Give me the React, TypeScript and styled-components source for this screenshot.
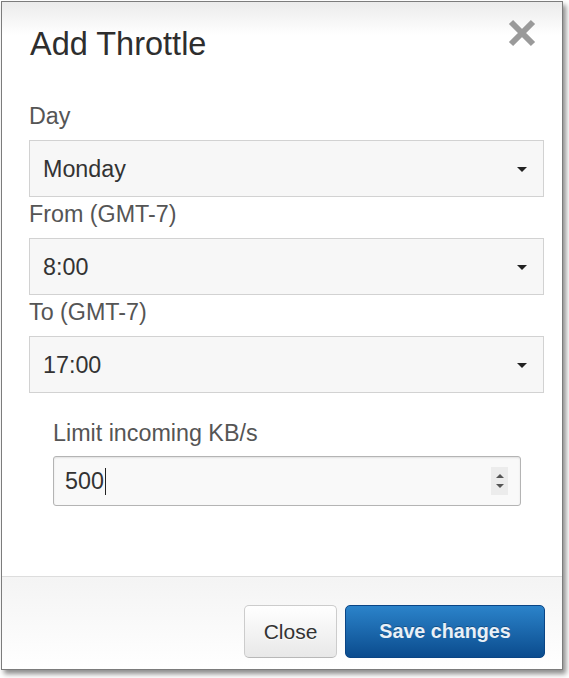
import React from "react";
import styled, { createGlobalStyle } from "styled-components";

const GlobalStyle = createGlobalStyle`
  html, body { margin: 0; padding: 0; background: #ffffff; }
  body { font-family: "Liberation Sans", Arial, sans-serif; }
  * { box-sizing: border-box; }
`;

const Page = styled.div`
  padding: 1px 0 0 1px;
  width: 569px;
  height: 678px;
`;

const Dialog = styled.div`
  width: 562px;
  height: 669px;
  border: 1px solid #7c7c7c;
  background: #ffffff;
  box-shadow: 3px 4px 5px rgba(0, 0, 0, 0.45);
  display: flex;
  flex-direction: column;
`;

const Header = styled.div`
  display: flex;
  justify-content: space-between;
  align-items: flex-start;
  padding: 17px 26px 0 28px;
  background: linear-gradient(#ebebeb 0%, #ffffff 55%);
`;

const Title = styled.h3`
  margin: 7px 0 0;
  font-size: 32.5px;
  line-height: 36px;
  font-weight: normal;
  color: #2e2e2e;
`;

const CloseX = styled.button`
  border: 0;
  padding: 0;
  background: transparent;
  width: 28px;
  height: 28px;
  display: flex;
  cursor: pointer;
`;

const Body = styled.div`
  padding: 41px 17px 0 27px;
  display: flex;
  flex-direction: column;
`;

const Field = styled.div<{ $indent?: number; $top?: number }>`
  display: flex;
  flex-direction: column;
  padding-left: ${(p) => p.$indent ?? 0}px;
  margin-top: ${(p) => p.$top ?? 0}px;
  margin-bottom: 4px;
`;

const Label = styled.label<{ $gap?: number }>`
  font-size: 23.3px;
  line-height: 26px;
  color: #555555;
  margin-bottom: ${(p) => p.$gap ?? 11}px;
`;

const SelectBox = styled.div`
  height: 57px;
  width: 515px;
  border: 1px solid #d2d2d2;
  background: #f7f7f7;
  display: flex;
  align-items: center;
  justify-content: space-between;
  padding: 2px 16px 0 13px;
  font-size: 23.3px;
  color: #333333;
`;

const Caret = styled.span`
  width: 0;
  height: 0;
  border-left: 5px solid transparent;
  border-right: 5px solid transparent;
  border-top: 5px solid #222222;
`;

const NumberBox = styled.div`
  width: 468px;
  height: 50px;
  border: 1px solid #b4b4b4;
  border-radius: 3px;
  background: #f9f9f9;
  box-shadow: inset 0 1px 2px rgba(0, 0, 0, 0.1);
  display: flex;
  align-items: center;
  justify-content: space-between;
  padding: 0 12px 0 11px;
  font-size: 23.3px;
  color: #333333;
`;

const Value = styled.span`
  display: flex;
  align-items: center;
`;

const TextCursor = styled.span`
  width: 1px;
  height: 27px;
  background: #222222;
  margin-left: 1px;
`;

const Spinner = styled.span`
  width: 17px;
  height: 28px;
  background: #ececec;
  display: flex;
  flex-direction: column;
  align-items: center;
  justify-content: center;
  gap: 6px;
`;

const Arrow = styled.span<{ $up?: boolean }>`
  width: 0;
  height: 0;
  border-left: 4px solid transparent;
  border-right: 4px solid transparent;
  ${(p) =>
    p.$up ? "border-bottom: 4px solid #555;" : "border-top: 4px solid #555;"}
`;

const Footer = styled.div`
  margin-top: auto;
  border-top: 1px solid #dddddd;
  background: linear-gradient(#f4f4f4 0%, #ffffff 100%);
  padding: 28px 17px 11px;
  display: flex;
  justify-content: flex-end;
  gap: 8px;
`;

const Button = styled.button<{ $primary?: boolean }>`
  height: 53px;
  border-radius: 5px;
  font-family: "Liberation Sans", Arial, sans-serif;
  cursor: pointer;
  ${(p) =>
    p.$primary
      ? `
    width: 200px;
    background: linear-gradient(#2b83ca, #0b4c8e);
    border: 1px solid #0a4585;
    color: #e9f0f7;
    font-size: 19.7px;
    font-weight: bold;
    text-shadow: 0 -1px 0 rgba(0,0,0,0.25);
  `
      : `
    width: 93px;
    background: linear-gradient(#ffffff, #e8e8e8);
    border: 1px solid #cccccc;
    border-bottom-color: #b8b8b8;
    color: #333333;
    font-size: 21px;
    text-shadow: 0 1px 1px rgba(255,255,255,0.75);
  `}
`;

const selects = [
  { label: "Day", value: "Monday" },
  { label: "From (GMT-7)", value: "8:00" },
  { label: "To (GMT-7)", value: "17:00" },
];

export default function App() {
  return (
    <Page>
      <GlobalStyle />
      <Dialog>
        <Header>
          <Title>Add Throttle</Title>
          <CloseX aria-label="Close">
            <svg width="28" height="28" viewBox="0 0 28 28">
              <path
                d="M3 3 L25 25 M25 3 L3 25"
                stroke="#9a9a9a"
                strokeWidth="6"
                strokeLinecap="butt"
              />
            </svg>
          </CloseX>
        </Header>
        <Body>
          {selects.map((s) => (
            <Field key={s.label}>
              <Label>{s.label}</Label>
              <SelectBox>
                <span>{s.value}</span>
                <Caret />
              </SelectBox>
            </Field>
          ))}
          <Field $indent={24} $top={23}>
            <Label $gap={10}>Limit incoming KB/s</Label>
            <NumberBox>
              <Value>
                500
                <TextCursor />
              </Value>
              <Spinner>
                <Arrow $up />
                <Arrow />
              </Spinner>
            </NumberBox>
          </Field>
        </Body>
        <Footer>
          <Button>Close</Button>
          <Button $primary>Save changes</Button>
        </Footer>
      </Dialog>
    </Page>
  );
}
